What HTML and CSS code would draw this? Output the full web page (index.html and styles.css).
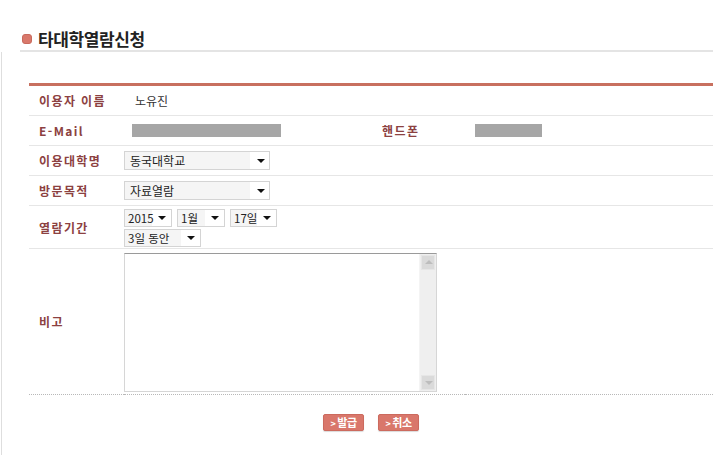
FILE: index.html
```html
<!DOCTYPE html>
<html lang="ko">
<head>
<meta charset="utf-8">
<title>타대학열람신청</title>
<link rel="stylesheet" href="styles.css">
</head>
<body>
<div class="page">
  <header class="title-bar">
    <span class="bullet"></span>
    <h1 class="title">타대학열람신청</h1>
  </header>
  <main class="panel">
    <table class="form">
      <colgroup>
        <col class="c-label">
        <col class="c-value">
        <col class="c-label2">
        <col>
      </colgroup>
      <tbody>
        <tr>
          <th>이용자 이름</th>
          <td colspan="3"><span class="text">노유진</span></td>
        </tr>
        <tr>
          <th>E-Mail</th>
          <td><span class="mask mask-mail"></span></td>
          <th class="th2">핸드폰</th>
          <td><span class="mask mask-phone"></span></td>
        </tr>
        <tr>
          <th>이용대학명</th>
          <td colspan="3">
            <span class="sel sel-wide"><select><option>동국대학교</option></select></span>
          </td>
        </tr>
        <tr>
          <th>방문목적</th>
          <td colspan="3">
            <span class="sel sel-wide"><select><option>자료열람</option></select></span>
          </td>
        </tr>
        <tr class="row-period">
          <th>열람기간</th>
          <td colspan="3">
            <div class="sel-line">
              <span class="sel sel-year"><select><option>2015</option></select></span>
              <span class="sel sel-month"><select><option>1월</option></select></span>
              <span class="sel sel-day"><select><option>17일</option></select></span>
            </div>
            <div class="sel-line">
              <span class="sel sel-dur"><select><option>3일 동안</option></select></span>
            </div>
          </td>
        </tr>
        <tr class="row-memo">
          <th>비고</th>
          <td colspan="3">
            <div class="memo">
              <textarea></textarea>
              <div class="scroll">
                <span class="sbtn up"></span>
                <span class="track"></span>
                <span class="sbtn down"></span>
              </div>
            </div>
          </td>
        </tr>
      </tbody>
    </table>
    <div class="actions">
      <button class="btn" type="button"><span class="chev">&gt;</span>발급</button>
      <button class="btn" type="button"><span class="chev">&gt;</span>취소</button>
    </div>
  </main>
</div>
</body>
</html>
```

FILE: styles.css
```css
* { box-sizing: border-box; }
html, body {
  margin: 0;
  padding: 0;
  background: #fff;
  width: 720px;
  height: 455px;
  overflow: hidden;
}
body {
  font-family: "Noto Sans CJK KR", "Noto Sans", sans-serif;
  font-size: 12px;
  color: #333;
}
.page {
  display: flex;
  flex-direction: column;
  height: 455px;
}
.title-bar {
  margin-left: 20px;
  width: 693px;
  padding: 28px 0 1px 2px;
  display: flex;
  align-items: center;
  gap: 6px;
  border-bottom: 2px solid #e4e4e4;
}
.bullet {
  width: 10px;
  height: 10px;
  border-radius: 3px;
  background: #d9786b;
  border: 1px solid #c86a5d;
}
.title {
  margin: 0;
  font-size: 17px;
  line-height: 21px;
  font-weight: bold;
  color: #222;
  letter-spacing: -0.4px;
}
.panel {
  flex: 1;
  margin-left: 1px;
  border-left: 1px solid #dedede;
  padding: 31px 0 0 27px;
}
.form {
  width: 684px;
  border-collapse: collapse;
  border-top: 3px solid #c8705f;
  table-layout: fixed;
}
.c-label { width: 95px; }
.c-value { width: 248px; }
.c-label2 { width: 93px; }
.form th,
.form td {
  height: 30px;
  padding: 0;
  border-bottom: 1px solid #e6e6e6;
  vertical-align: middle;
}
.form tr:first-child th,
.form tr:first-child td { height: 31px; }
.form th {
  text-align: left;
  padding-left: 10px;
  font-weight: bold;
  color: #8c4141;
  letter-spacing: 1.4px;
  white-space: nowrap;
}
.form th.th2 { padding-left: 10px; }
.text {
  padding-left: 11px;
  color: #333;
}
.mask {
  display: block;
  height: 13px;
  background: #a6a6a6;
}
.mask-mail { width: 149px; margin-left: 8px; }
.mask-phone { width: 67px; margin-left: 10px; }

.sel {
  position: relative;
  display: inline-block;
  vertical-align: top;
}
.sel select {
  appearance: none;
  -webkit-appearance: none;
  display: block;
  width: 100%;
  height: 19px;
  margin: 0;
  padding: 0 0 0 5px;
  border: 1px solid #d4d4d4;
  border-radius: 0;
  background: linear-gradient(to right, #f5f5f5 calc(100% - 19px), #fff 0);
  font-family: "Noto Sans CJK KR", "Noto Sans", sans-serif;
  font-size: 12px;
  line-height: 17px;
  color: #222;
}
.sel::after {
  content: "";
  position: absolute;
  right: 5px;
  top: 8px;
  border-left: 4px solid transparent;
  border-right: 4px solid transparent;
  border-top: 4px solid #111;
  pointer-events: none;
}
.sel-wide { width: 146px; margin-left: 0; }
.sel-year { width: 48px; }
.sel-month { width: 48px; }
.sel-day { width: 47px; }
.sel-dur { width: 77px; }
.row-period td { padding: 3px 0 1px; }
.sel-line {
  display: flex;
  gap: 5px;
}
.sel-line + .sel-line { margin-top: 2px; }
.row-period .sel select {
  height: 18px;
  line-height: 16px;
  font-size: 11.5px;
  padding-left: 3px;
}
.row-period .sel::after { top: 7px; right: 6px; }

.row-memo th,
.row-memo td {
  height: 146px;
  border-bottom: 1px dotted #b8b8b8;
}
.row-memo td { padding: 3px 0 2px; }
.memo {
  display: flex;
  width: 313px;
  height: 139px;
  border: 1px solid #d6d6d6;
  border-top-color: #9a9a9a;
  background: #fff;
}
.memo textarea {
  flex: 1;
  border: 0;
  margin: 0;
  padding: 0;
  resize: none;
  outline: none;
  overflow: hidden;
}
.scroll {
  width: 17px;
  display: flex;
  flex-direction: column;
  background: #efefef;
  border-left: 1px solid #f4f4f4;
  padding: 1px 1px;
}
.track { flex: 1; }
.sbtn {
  position: relative;
  height: 15px;
  background: #dadada;
  border: 1px solid #e6e6e6;
}
.sbtn::after {
  content: "";
  position: absolute;
  left: 3px;
  border-left: 4px solid transparent;
  border-right: 4px solid transparent;
}
.sbtn.up::after { top: 4px; border-bottom: 4px solid #bdbdbd; }
.sbtn.down::after { top: 5px; border-top: 4px solid #bdbdbd; }

.actions {
  width: 684px;
  display: flex;
  justify-content: center;
  gap: 14px;
  margin-top: 19px;
}
.btn {
  width: 41px;
  height: 17px;
  padding: 0;
  border: 1px solid #cc6a5e;
  border-radius: 2px;
  background: #d9776b;
  color: #fff;
  font-family: "Noto Sans CJK KR", "Noto Sans", sans-serif;
  font-size: 11px;
  line-height: 15px;
  font-weight: bold;
  letter-spacing: -0.5px;
  box-shadow: 0 1px 1px rgba(0,0,0,0.15);
}
.chev {
  font-size: 9px;
  margin-right: 2px;
}
```
